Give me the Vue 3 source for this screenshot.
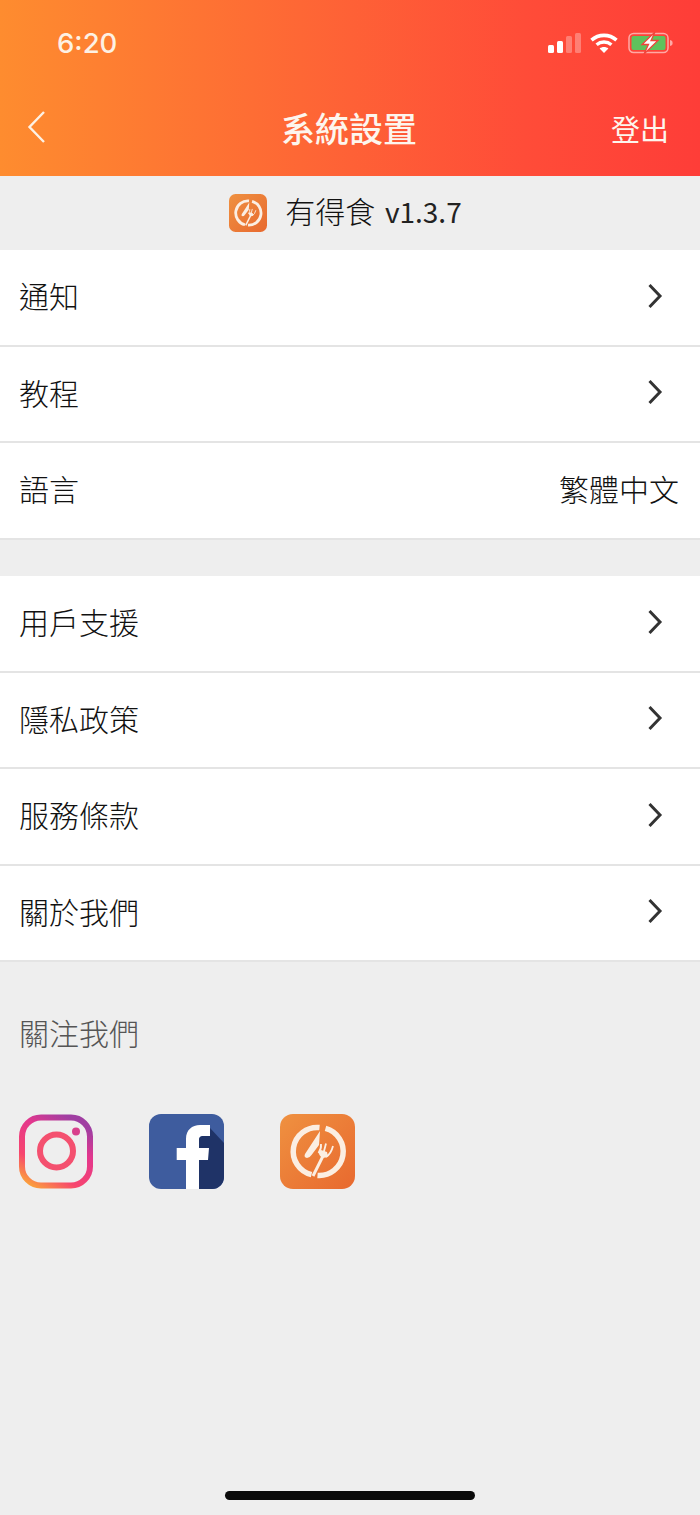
<template>
  <div class="page">
    <header class="head">
      <div class="status">
        <span class="time">6:20</span>
        <div class="status-icons">
          <svg class="signal" width="33" height="20" viewBox="0 0 33 20">
            <rect x="0" y="12" width="6" height="8" rx="1.5" fill="#fff" />
            <rect x="9" y="8" width="6" height="12" rx="1.5" fill="#fff" />
            <rect x="18" y="3" width="6" height="17" rx="1.5" fill="#fff" opacity=".3" />
            <rect x="27" y="0" width="6" height="20" rx="1.5" fill="#fff" opacity=".3" />
          </svg>
          <svg width="28" height="20" viewBox="0 0 28 20">
            <path d="M1.5 7.2C8.6.8 19.4.8 26.5 7.2" fill="none" stroke="#fff" stroke-width="3.6" />
            <path d="M6.6 11.8c4.3-3.7 10.5-3.7 14.800 0" fill="none" stroke="#fff" stroke-width="3.4" />
            <path d="M14 20l-4.400-4.600c2.500-2 6.300-2 8.800 0z" fill="#fff" />
          </svg>
          <svg width="45" height="22" viewBox="0 0 45 22">
            <rect x="1" y="1.500" width="39" height="19" rx="4.500" fill="none" stroke="#fff" stroke-opacity=".55" stroke-width="1.500" />
            <rect x="3.500" y="4" width="34" height="14" rx="2" fill="#5fc25c" />
            <path d="M42 8c2 .4 2.600 1.500 2.600 3s-.6 2.600-2.600 3z" fill="#fff" opacity=".55" />
            <path d="M27 0 14 12.500h6.500L16 22 30 8.500h-7z" fill="#fff" stroke="#f0443a" stroke-width="1.300" />
          </svg>
        </div>
      </div>
      <div class="nav">
        <svg width="20" height="34" viewBox="0 0 20 34">
          <path d="M17 2 2.500 17 17 32" fill="none" stroke="#fdf1e4" stroke-width="2.400" />
        </svg>
        <h1>系統設置</h1>
        <span class="logout">登出</span>
      </div>
    </header>

    <div class="version">
      <svg width="38" height="38" viewBox="0 0 75 75">
        <defs>
          <linearGradient id="brand" x1="0" y1="0" x2="1" y2="1">
            <stop offset="0" stop-color="#ef9140" />
            <stop offset="1" stop-color="#e8692f" />
          </linearGradient>
          <symbol id="plate" viewBox="0 0 75 75">
            <rect width="75" height="75" rx="13" fill="url(#brand)" />
            <path d="M39.500 13.500A24 24 0 0 0 31.500 60.700M45.500 14.400A24 24 0 0 1 37.500 61.500" fill="none" stroke="#fbeee2" stroke-width="5.500" />
            <path d="M40 17 25 40q-1.500 3.500 2 4 2.500 0 4.500-3L39 31z" fill="#fbeee2" />
            <path d="M43 42 33 62" stroke="#fbeee2" stroke-width="3" />
            <path d="M38.500 39Q41.500 35 41 30M43 41 46 29.500M46 43Q51 40 53 32" fill="none" stroke="#fbeee2" stroke-width="1.800" />
            <path d="M38.500 38.500Q41 46.500 48 42.500L47 38 41 36z" fill="#fbeee2" />
          </symbol>
        </defs>
        <use href="#plate" />
      </svg>
      <span class="version-text">有得食 <span class="version-no">v1.3.7</span></span>
    </div>

    <section class="group">
      <div v-for="row in firstRows" :key="row.label" class="row">
        <span>{{ row.label }}</span>
        <span v-if="row.value">{{ row.value }}</span>
        <svg v-else class="chevron" width="16" height="26" viewBox="0 0 16 26">
          <path d="M2.500 2 13 13 2.500 24" fill="none" stroke="#333" stroke-width="3" />
        </svg>
      </div>
    </section>

    <section class="group second">
      <div v-for="label in secondRows" :key="label" class="row">
        <span>{{ label }}</span>
        <svg class="chevron" width="16" height="26" viewBox="0 0 16 26">
          <path d="M2.500 2 13 13 2.500 24" fill="none" stroke="#333" stroke-width="3" />
        </svg>
      </div>
    </section>

    <p class="follow">關注我們</p>

    <div class="social">
      <svg width="75" height="75" viewBox="0 0 75 75">
        <defs>
          <linearGradient id="insta" x1="0.1" y1="1" x2="0.7" y2="0">
            <stop offset="0" stop-color="#fba33a" />
            <stop offset="0.3" stop-color="#f7456e" />
            <stop offset="0.7" stop-color="#e4378d" />
            <stop offset="1" stop-color="#a03ea2" />
          </linearGradient>
        </defs>
        <rect x="4" y="3.500" width="68" height="68" rx="19" fill="none" stroke="url(#insta)" stroke-width="6" />
        <circle cx="38.500" cy="37" r="16.500" fill="none" stroke="#f4506f" stroke-width="6" />
        <circle cx="58" cy="17.500" r="4" fill="#d8408c" />
      </svg>
      <svg width="75" height="75" viewBox="0 0 75 75">
        <rect width="75" height="75" rx="12" fill="#3e5c9e" />
        <path d="M50 75V24l11-10 14 15v34a12 12 0 0 1-12 12z" fill="#1f3367" />
        <path d="M37 75V46H27.700V34H37v-9c0-9 6-14 14-14h10v11h-7c-3 0-4 1-4 4v8h10l-1 12h-9v29z" fill="#fff" />
      </svg>
      <svg width="75" height="75" viewBox="0 0 75 75">
        <use href="#plate" />
      </svg>
    </div>

    <div class="home-bar"></div>
  </div>
</template>

<script setup>
const firstRows = [
  { label: "通知" },
  { label: "教程" },
  { label: "語言", value: "繁體中文" },
];

const secondRows = ["用戶支援", "隱私政策", "服務條款", "關於我們"];
</script>

<style scoped>
.page {
  width: 700px;
  height: 1515px;
  display: flex;
  flex-direction: column;
  overflow: hidden;
  background: #eeeeee;
  color: #111;
  font-family: "Noto Sans CJK TC", "Noto Sans", sans-serif;
}

.head {
  height: 176px;
  flex: none;
  box-sizing: border-box;
  padding-top: 26px;
  background: linear-gradient(90deg, #fe8c2f 0%, #fe6136 50%, #ff4c38 75%, #fe3d38 100%);
  color: #fff;
}

.status {
  height: 34px;
  display: flex;
  align-items: center;
  justify-content: space-between;
  padding: 0 27px 0 57px;
}

.time {
  font-family: Inter, "Liberation Sans", sans-serif;
  font-size: 27.500px;
  font-weight: 500;
  color: #fdf1e4;
}

.status-icons {
  display: flex;
  align-items: center;
  gap: 10px;
}

.signal {
  margin-right: -1px;
}

.nav {
  height: 64px;
  margin-top: 35px;
  display: flex;
  align-items: center;
  justify-content: space-between;
  padding: 0 31px 0 27px;
  position: relative;
}

.nav h1 {
  margin: 0;
  padding-right: 2px;
  position: absolute;
  left: 0;
  right: 0;
  text-align: center;
  font-size: 34px;
  font-weight: 500;
  color: #fdf6ee;
}

.logout {
  font-size: 29px;
  color: #fdf6ee;
  padding-top: 1px;
}

.version {
  height: 74px;
  flex: none;
  display: flex;
  align-items: center;
  justify-content: center;
  gap: 18px;
  padding-right: 9px;
  font-size: 30px;
  font-weight: 300;
  white-space: pre;
}

.version-text {
  padding-bottom: 6px;
  word-spacing: 3px;
}

.version-no {
  font-size: 28px;
  font-weight: 400;
  color: #222;
}

.group {
  flex: none;
}

.second {
  margin-top: 36.500px;
}

.row {
  height: 94.500px;
  display: flex;
  align-items: center;
  justify-content: space-between;
  padding: 0 21px 0 19px;
  background: #fff;
  border-bottom: 2px solid #e4e4e4;
  font-size: 30px;
  font-weight: 300;
}

.row > span {
  padding-bottom: 4px;
}

.chevron {
  margin-right: 16px;
  margin-bottom: 3px;
}

.follow {
  margin: 48px 0 0 19px;
  font-size: 30px;
  font-weight: 300;
  line-height: 44px;
  color: #555;
}

.social {
  margin-top: 60px;
  display: flex;
  gap: 56px;
  padding-left: 18px;
}

.home-bar {
  width: 250px;
  height: 9px;
  margin: auto auto 15px;
  border-radius: 5px;
  background: #0a0a0a;
}
</style>

<style>
html,
body {
  margin: 0;
  background: #eeeeee;
}
</style>
